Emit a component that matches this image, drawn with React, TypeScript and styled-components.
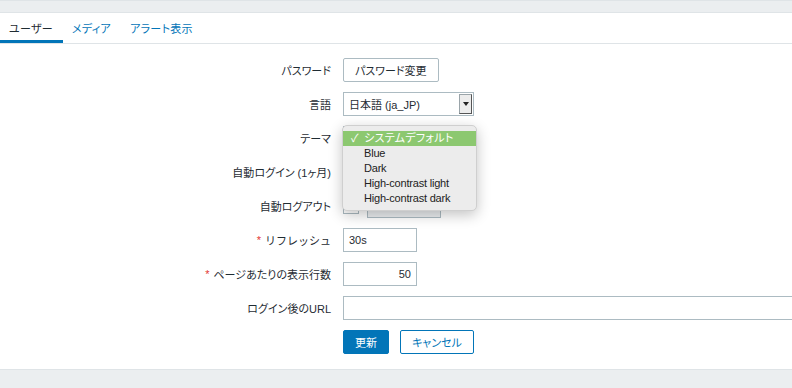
import React from 'react'
import styled, { createGlobalStyle } from 'styled-components'

const GlobalStyle = createGlobalStyle`
    html, body {
        margin: 0;
        padding: 0;
        background: #ebeef0;
        overflow: hidden;
    }
    body {
        font-family: "Liberation Sans", Arial, "Noto Sans CJK JP", sans-serif;
        font-size: 11px;
        font-feature-settings: "palt";
        color: #1f2c33;
    }
`

const Page = styled.div`
    width: 792px;
    height: 388px;
    border-top: 1px solid #dfe4e7;
    padding-top: 11px;
    box-sizing: border-box;
    overflow: hidden;
`

const Card = styled.div`
    background: #fff;
    border-top: 1px solid #dfe4e7;
    border-bottom: 1px solid #dfe4e7;
    height: 358px;
    box-sizing: border-box;
`

const Tabs = styled.ul`
    display: flex;
    list-style: none;
    margin: 0;
    padding: 0;
    border-bottom: 1px solid #dfe4e7;
`

const Tab = styled.li<{ $active?: boolean }>`
    height: 30px;
    box-sizing: border-box;
    padding: 2px 10px 0 9px;
    display: flex;
    align-items: center;
    letter-spacing: 0.3px;
    border-bottom: 3px solid ${p => (p.$active ? '#0275b8' : 'transparent')};
    color: ${p => (p.$active ? '#1f2c33' : '#0275b8')};
`

const Form = styled.div`
    display: grid;
    grid-template-columns: 332px 1fr;
    grid-auto-rows: 24px;
    column-gap: 11px;
    row-gap: 10px;
    padding-top: 14px;
`

const Label = styled.div<{ $fullWidth?: boolean }>`
    display: flex;
    align-items: center;
    justify-content: flex-end;
    white-space: nowrap;
    padding-right: 1px;
    font-feature-settings: ${p => (p.$fullWidth ? 'normal' : '"palt"')};
`

const Required = styled.span`
    color: #e33734;
    margin-right: 4px;
`

const Control = styled.div`
    position: relative;
    display: flex;
    align-items: center;
    gap: 8px;
`

const ButtonRow = styled(Control)`
    gap: 11px;
`

const Button = styled.button<{ $variant?: 'primary' | 'outline' | 'grey' }>`
    height: 24px;
    box-sizing: border-box;
    padding: 0 11px;
    font: inherit;
    font-feature-settings: "palt";
    border-radius: 2px;
    cursor: pointer;
    background: ${p => (p.$variant === 'primary' ? '#0275b8' : '#fff')};
    color: ${p => (p.$variant === 'primary' ? '#fff' : p.$variant === 'outline' ? '#0275b8' : '#1f2c33')};
    border: 1px solid ${p => (p.$variant === 'grey' ? '#acbbc2' : '#0275b8')};
`

const Input = styled.div<{ $width: number; $right?: boolean; $disabled?: boolean }>`
    width: ${p => p.$width}px;
    height: 24px;
    box-sizing: border-box;
    flex-shrink: 0;
    border: 1px solid #acbbc2;
    background: ${p => (p.$disabled ? '#ebeef0' : '#fff')};
    color: ${p => (p.$disabled ? '#acbbc2' : '#1f2c33')};
    padding: 0 5px;
    display: flex;
    align-items: center;
    justify-content: ${p => (p.$right ? 'flex-end' : 'flex-start')};
`

const Select = styled.div`
    width: 131px;
    height: 24px;
    box-sizing: border-box;
    border: 1px solid #acbbc2;
    display: flex;
    align-items: center;
    padding-left: 5px;
    background: #fff;
`

const SelectArrow = styled.div`
    width: 13px;
    height: 20px;
    margin: 0 1px 0 auto;
    box-sizing: border-box;
    background: #ececec;
    border: 1px solid #9aa4a9;
    border-right-color: #555;
    border-bottom-color: #555;
    display: flex;
    align-items: center;
    justify-content: center;
    &::after {
        content: '';
        border-left: 3px solid transparent;
        border-right: 3px solid transparent;
        border-top: 4px solid #222;
    }
`

const Checkbox = styled.div`
    width: 16px;
    height: 16px;
    box-sizing: border-box;
    flex-shrink: 0;
    border: 1px solid #acbbc2;
    background: #fff;
`

const Popup = styled.ul`
    position: absolute;
    top: -1px;
    left: -1px;
    width: 135px;
    margin: 0;
    padding: 5px 0 4px;
    list-style: none;
    box-sizing: border-box;
    background: #ececec;
    border: 1px solid #cfcfcf;
    border-radius: 5px;
    box-shadow: 0 4px 14px rgba(0, 0, 0, 0.24);
    font-size: 11px;
    letter-spacing: -0.2px;
    color: #222;
    z-index: 2;
`

const PopupItem = styled.li<{ $selected?: boolean }>`
    position: relative;
    height: 15px;
    line-height: 15px;
    padding-left: 21px;
    white-space: nowrap;
    background: ${p => (p.$selected ? '#8cc870' : 'transparent')};
    color: ${p => (p.$selected ? '#fff' : '#222')};
    letter-spacing: ${p => (p.$selected ? '0.3px' : '-0.2px')};
`

const Check = styled.span`
    position: absolute;
    left: 8px;
`

const themes = ['システムデフォルト', 'Blue', 'Dark', 'High-contrast light', 'High-contrast dark']

export default function App() {
    return (
        <>
            <GlobalStyle />
            <Page>
                <Card>
                    <Tabs>
                        <Tab $active>ユーザー</Tab>
                        <Tab>メディア</Tab>
                        <Tab>アラート表示</Tab>
                    </Tabs>
                    <Form>
                        <Label>パスワード</Label>
                        <Control>
                            <Button $variant="grey">パスワード変更</Button>
                        </Control>

                        <Label>言語</Label>
                        <Control>
                            <Select>
                                日本語 (ja_JP)
                                <SelectArrow />
                            </Select>
                        </Control>

                        <Label>テーマ</Label>
                        <Control>
                            <Select>
                                <SelectArrow />
                            </Select>
                            <Popup>
                                {themes.map((t, i) => (
                                    <PopupItem key={t} $selected={i === 0}>
                                        {i === 0 && <Check>✓</Check>}
                                        {t}
                                    </PopupItem>
                                ))}
                            </Popup>
                        </Control>

                        <Label>自動ログイン (1ヶ月)</Label>
                        <Control>
                            <Checkbox />
                        </Control>

                        <Label>自動ログアウト</Label>
                        <Control>
                            <Checkbox />
                            <Input $width={74} $disabled>15m</Input>
                        </Control>

                        <Label $fullWidth><Required>*</Required>リフレッシュ</Label>
                        <Control>
                            <Input $width={74}>30s</Input>
                        </Control>

                        <Label><Required>*</Required>ページあたりの表示行数</Label>
                        <Control>
                            <Input $width={74} $right>50</Input>
                        </Control>

                        <Label>ログイン後のURL</Label>
                        <Control>
                            <Input $width={480} />
                        </Control>

                        <div />
                        <ButtonRow>
                            <Button $variant="primary">更新</Button>
                            <Button $variant="outline">キャンセル</Button>
                        </ButtonRow>
                    </Form>
                </Card>
            </Page>
        </>
    )
}
